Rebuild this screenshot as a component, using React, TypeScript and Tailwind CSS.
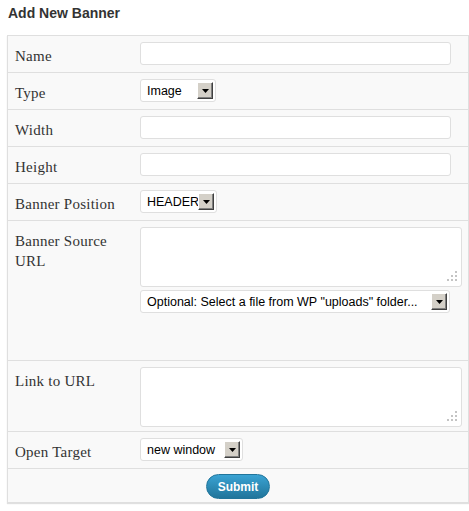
import React from 'react';

const labelCls =
  "w-[132px] shrink-0 pl-[7px] pt-[10px] text-[15px] leading-[20px] tracking-[0.25px] text-[#333] font-['Liberation_Serif',serif]";

const ArrowButton: React.FC = () => (
  <div className="w-[16px] h-[17px] shrink-0 flex items-center justify-center bg-[#d4d0c8] border-t border-l border-t-white border-l-white border-b border-r border-b-[#404040] border-r-[#404040] shadow-[inset_-1px_-1px_0_#808080]">
    <svg width="7" height="4" viewBox="0 0 7 4">
      <polygon points="0,0 7,0 3.5,4" fill="#000" />
    </svg>
  </div>
);

interface SelectProps {
  value: string;
  className: string;
}

const FakeSelect: React.FC<SelectProps> = ({ value, className }) => (
  <div
    className={`${className} h-[23px] flex items-center bg-white border border-[#dfdfdf] rounded-[3px] pl-[6px] pr-[2px]`}
  >
    <span className="flex-1 min-w-0 pt-[1px] overflow-hidden whitespace-nowrap text-[12.5px] text-black font-['Liberation_Sans',Arial,sans-serif]">
      {value}
    </span>
    <ArrowButton />
  </div>
);

const TextBox: React.FC = () => (
  <input
    type="text"
    className="block w-[311px] h-[23px] bg-white border border-[#dfdfdf] rounded-[3px] outline-none"
  />
);

const Grip: React.FC = () => (
  <svg className="absolute right-[5px] bottom-[5px]" width="11" height="11" viewBox="0 0 11 11">
    <rect x="9" y="0" width="2" height="2" fill="#c4c4c4" />
    <rect x="5" y="4" width="2" height="2" fill="#c4c4c4" />
    <rect x="9" y="4" width="2" height="2" fill="#c4c4c4" />
    <rect x="1" y="8" width="2" height="2" fill="#c4c4c4" />
    <rect x="5" y="8" width="2" height="2" fill="#c4c4c4" />
    <rect x="9" y="8" width="2" height="2" fill="#c4c4c4" />
  </svg>
);

const TextArea: React.FC = () => (
  <div className="relative w-[322px] h-[60px]">
    <textarea className="block w-full h-full bg-white border border-[#dfdfdf] rounded-[3px] resize-none outline-none" />
    <Grip />
  </div>
);

const App: React.FC = () => {
  return (
    <div className="w-[469px] h-[511px] bg-white">
      <h2 className="pl-[8px] pt-[3px] leading-[20px] text-[14px] font-bold text-[#333] font-['Liberation_Sans',Arial,sans-serif]">
        Add New Banner
      </h2>

      <div className="ml-[7px] mt-[12px] w-[462px] bg-[#f9f9f9] border border-[#dfdfdf] shadow-[0_1px_1px_rgba(0,0,0,0.12)]">
        <div className="flex border-b border-[#dfdfdf]">
          <div className={labelCls}>Name</div>
          <div className="pt-[6px] pb-[7px]">
            <TextBox />
          </div>
        </div>

        <div className="flex border-b border-[#dfdfdf]">
          <div className={labelCls}>Type</div>
          <div className="pt-[6px] pb-[7px]">
            <FakeSelect value="Image" className="w-[76px]" />
          </div>
        </div>

        <div className="flex border-b border-[#dfdfdf]">
          <div className={labelCls}>Width</div>
          <div className="pt-[6px] pb-[7px]">
            <TextBox />
          </div>
        </div>

        <div className="flex border-b border-[#dfdfdf]">
          <div className={labelCls}>Height</div>
          <div className="pt-[6px] pb-[7px]">
            <TextBox />
          </div>
        </div>

        <div className="flex border-b border-[#dfdfdf]">
          <div className={labelCls}>Banner Position</div>
          <div className="pt-[6px] pb-[7px]">
            <FakeSelect value="HEADER" className="w-[77px]" />
          </div>
        </div>

        <div className="flex h-[140px] border-b border-[#dfdfdf]">
          <div className={labelCls}>
            Banner Source
            <br />
            URL
          </div>
          <div className="pt-[6px]">
            <TextArea />
            <FakeSelect
              value={'Optional: Select a file from WP "uploads" folder...'}
              className="w-[310px] mt-[3px]"
            />
          </div>
        </div>

        <div className="flex border-b border-[#dfdfdf]">
          <div className={labelCls}>Link to URL</div>
          <div className="pt-[6px] pb-[4px]">
            <TextArea />
          </div>
        </div>

        <div className="flex border-b border-[#dfdfdf]">
          <div className={labelCls}>Open Target</div>
          <div className="pt-[6px] pb-[7px]">
            <FakeSelect value="new window" className="w-[103px]" />
          </div>
        </div>

        <div className="flex justify-center pt-[5px] pb-[3px]">
          <button className="w-[64px] h-[25px] rounded-full border border-[#21759b] bg-gradient-to-b from-[#3aa3d3] to-[#21759b] text-white text-[12px] font-bold font-['Liberation_Sans',Arial,sans-serif]">
            Submit
          </button>
        </div>
      </div>
    </div>
  );
};

export default App;
